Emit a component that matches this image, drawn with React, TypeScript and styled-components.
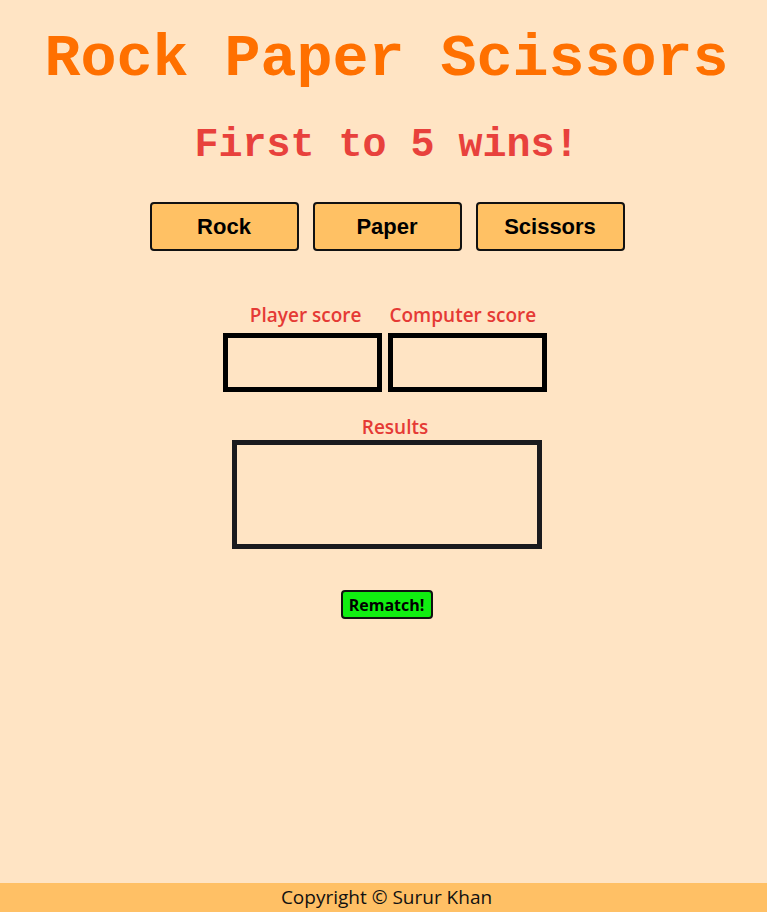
import styled, { createGlobalStyle } from 'styled-components'

const GlobalStyle = createGlobalStyle`
  html, body {
    margin: 0;
    padding: 0;
    background: #ffe4c4;
  }
`

const Page = styled.div`
  min-height: 100vh;
  display: flex;
  flex-direction: column;
  align-items: center;
  padding-left: 6px;
  box-sizing: border-box;
`

const Title = styled.h1`
  margin: 29px 0 0;
  font-family: "Liberation Mono", "Courier New", monospace;
  font-weight: bold;
  font-size: 60px;
  line-height: 60px;
  color: #ff7000;
`

const Subtitle = styled.h2`
  margin: 37px 0 0;
  font-family: "Liberation Mono", "Courier New", monospace;
  font-weight: bold;
  font-size: 40px;
  line-height: 40px;
  color: #e8413c;
`

const Choices = styled.div`
  display: flex;
  gap: 14px;
  margin-top: 36px;
  margin-left: 1px;
`

const ChoiceButton = styled.button`
  width: 149px;
  height: 49px;
  background: #ffc164;
  border: 2px solid #111;
  border-radius: 4px;
  font-family: "Liberation Sans", Arial, sans-serif;
  font-weight: bold;
  font-size: 22px;
  color: #000;
  cursor: pointer;
`

const Row = styled.div<{ $gap: number; $shift: number; $top?: number }>`
  display: flex;
  gap: ${p => p.$gap}px;
  margin-left: ${p => p.$shift}px;
  margin-top: ${p => p.$top || 0}px;
`

const Label = styled.div<{ $below?: number; $indent?: number }>`
  font-family: "Open Sans", "Noto Sans", sans-serif;
  font-weight: 600;
  font-size: 19px;
  line-height: 26px;
  color: #e53a35;
  margin-bottom: ${p => p.$below || 0}px;
  padding-left: ${p => p.$indent || 0}px;
`

const Box = styled.div<{ $w: number; $h: number; $c?: string }>`
  width: ${p => p.$w}px;
  height: ${p => p.$h}px;
  border: 5px solid ${p => p.$c || '#000'};
  box-sizing: border-box;
`

const ResultsField = styled.div`
  display: flex;
  flex-direction: column;
  align-items: center;
  margin-top: 22px;
  margin-left: 1px;
`

const Rematch = styled.button`
  margin-top: 41px;
  width: 92px;
  height: 29px;
  background: #11ee11;
  border: 2px solid #111;
  border-radius: 4px;
  font-family: "Open Sans", "Noto Sans", sans-serif;
  font-weight: bold;
  font-size: 16px;
  color: #000;
  padding: 0;
  cursor: pointer;
`

const Footer = styled.footer`
  margin-top: auto;
  align-self: stretch;
  margin-left: -6px;
  padding-left: 6px;
  height: 29px;
  background: #ffc065;
  text-align: center;
  font-family: "Open Sans", "Noto Sans", sans-serif;
  font-size: 19px;
  line-height: 29px;
  color: #111;
`

function App() {
  return <>
    <GlobalStyle />
    <Page>
      <Title>Rock Paper Scissors</Title>
      <Subtitle>First to 5 wins!</Subtitle>
      <Choices>
        <ChoiceButton>Rock</ChoiceButton>
        <ChoiceButton>Paper</ChoiceButton>
        <ChoiceButton>Scissors</ChoiceButton>
      </Choices>
      <Row $gap={28} $shift={13} $top={51}>
        <Label $below={5}>Player score</Label>
        <Label $below={5}>Computer score</Label>
      </Row>
      <Row $gap={6} $shift={-4}>
        <Box $w={159} $h={59} />
        <Box $w={159} $h={59} />
      </Row>
      <ResultsField>
        <Label $indent={16}>Results</Label>
        <Box $w={310} $h={109} $c="#1a1a1e" />
      </ResultsField>
      <Rematch>Rematch!</Rematch>
      <Footer>Copyright © Surur Khan</Footer>
    </Page>
  </>
}

export default App
